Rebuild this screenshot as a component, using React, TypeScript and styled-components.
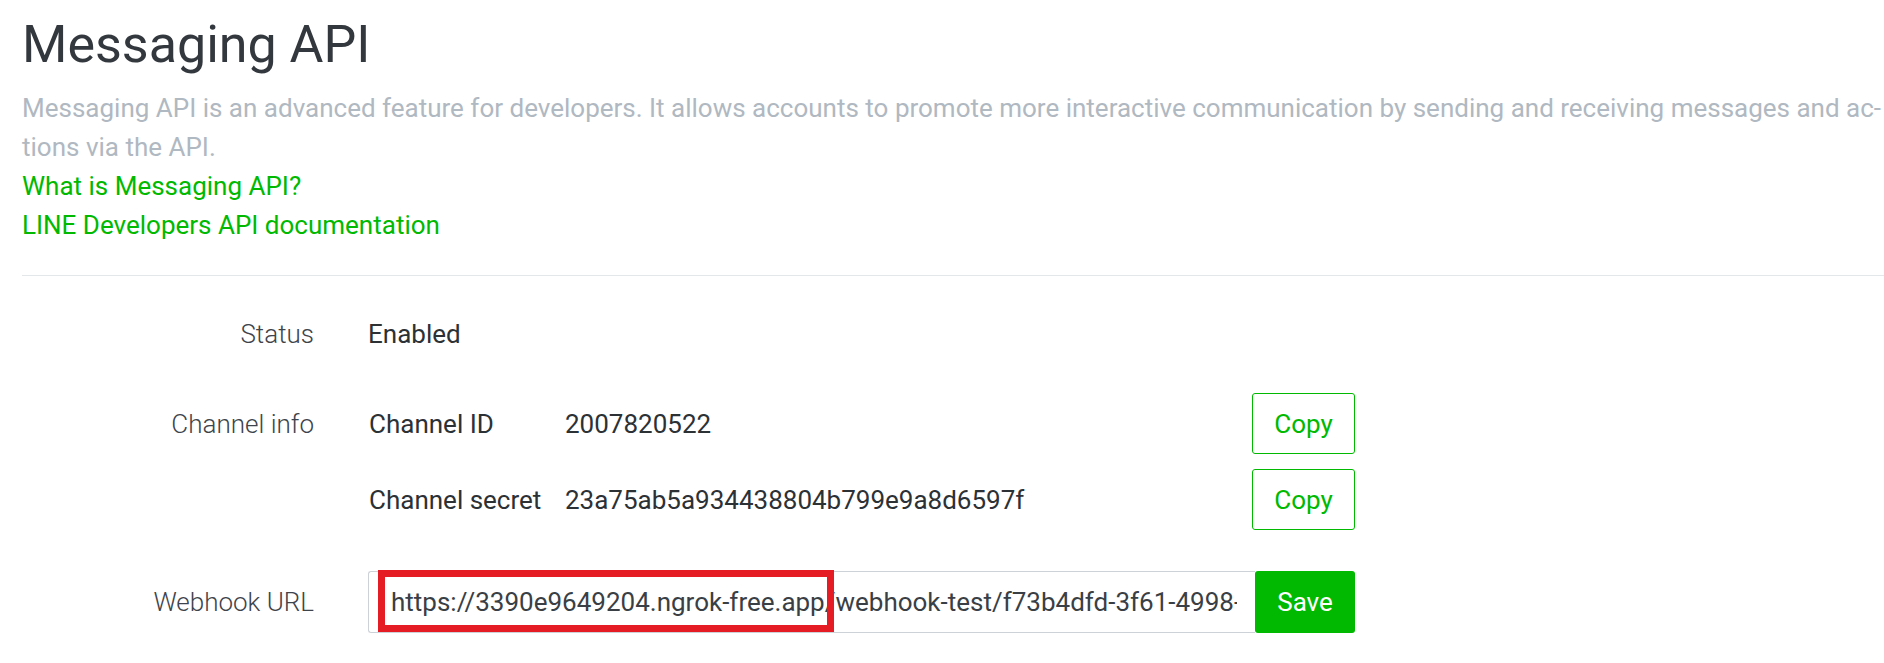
import React from "react";
import styled, { createGlobalStyle } from "styled-components";

const Global = createGlobalStyle`
  html, body {
    margin: 0;
    padding: 0;
    background: #ffffff;
    overflow: hidden;
  }
  body {
    font-family: Roboto, "Noto Sans", "Liberation Sans", sans-serif;
    -webkit-font-smoothing: antialiased;
  }
  * { box-sizing: border-box; }
`;

const Page = styled.main`
  padding: 12px 0 0 22px;
`;

const Title = styled.h1`
  margin: 0;
  font-size: 52px;
  line-height: 65px;
  font-weight: 400;
  color: #33383e;
`;

const Description = styled.p`
  margin: 12px 0 0;
  font-size: 26px;
  line-height: 39px;
  color: #b0b8c1;
  white-space: nowrap;
`;

const LinkLine = styled.a`
  display: block;
  font-size: 26px;
  line-height: 39px;
  color: #00b900;
  text-decoration: none;
`;

const Divider = styled.hr`
  margin: 30px 0 0;
  border: 0;
  border-top: 1px solid #e4e7ea;
  height: 0;
`;

const Form = styled.section`
  display: grid;
  grid-template-columns: 292px 987px;
  column-gap: 54px;
  row-gap: 39px;
  padding-top: 38px;
  align-items: start;
`;

const Label = styled.div<{ $h: number; $offset?: number }>`
  height: ${(p) => p.$h}px;
  margin-top: ${(p) => p.$offset ?? 0}px;
  display: flex;
  align-items: center;
  justify-content: flex-end;
  font-size: 26px;
  font-weight: 300;
  color: #3e444b;
  white-space: nowrap;
`;

const Value = styled.div<{ $h: number }>`
  height: ${(p) => p.$h}px;
  display: flex;
  align-items: center;
  font-size: 26px;
  color: #2c3136;
  white-space: nowrap;
`;

const InfoGrid = styled.div`
  display: grid;
  grid-template-columns: 197px 1fr 103px;
  row-gap: 15px;
  align-items: center;
`;

const InfoKey = styled.div`
  height: 61px;
  display: flex;
  align-items: center;
  font-size: 26px;
  color: #2c3136;
  padding-left: 1px;
  white-space: nowrap;
`;

const InfoVal = styled.div`
  font-size: 26px;
  color: #2c3136;
`;

const CopyButton = styled.button`
  height: 61px;
  width: 103px;
  border: 1px solid #00b900;
  border-radius: 3px;
  background: #ffffff;
  color: #00b900;
  font-family: inherit;
  font-size: 26px;
  padding: 0;
  cursor: pointer;
`;

const InputGroup = styled.div`
  position: relative;
  display: flex;
  height: 62px;
  margin-top: 2px;
`;

const UrlInput = styled.input`
  flex: 1;
  min-width: 0;
  height: 62px;
  border: 1px solid #cdd2d8;
  border-right: 0;
  border-radius: 3px 0 0 3px;
  padding: 0 18px 0 22px;
  font-family: inherit;
  font-size: 26px;
  color: #3a3f45;
  background: #fff;
  outline: none;
`;

const SaveButton = styled.button`
  width: 100px;
  height: 62px;
  border: 0;
  border-radius: 3px;
  background: #00b900;
  color: #ffffff;
  font-family: inherit;
  font-size: 26px;
  padding: 0;
  cursor: pointer;
`;

const Highlight = styled.div`
  position: absolute;
  left: 10px;
  top: -1px;
  width: 456px;
  height: 62px;
  border: 7px solid #e51c23;
  pointer-events: none;
`;

export default function App() {
  return (
    <>
      <Global />
      <Page>
        <Title>Messaging API</Title>
        <Description>
          Messaging API is an advanced feature for developers. It allows accounts to promote more
          interactive communication by sending and receiving messages and ac-
          <br />
          tions via the API.
        </Description>
        <LinkLine href="#">What is Messaging API?</LinkLine>
        <LinkLine href="#">LINE Developers API documentation</LinkLine>
        <Divider />
        <Form>
          <Label $h={40}>Status</Label>
          <Value $h={40}>Enabled</Value>

          <Label $h={61}>Channel info</Label>
          <InfoGrid>
            <InfoKey>Channel ID</InfoKey>
            <InfoVal>2007820522</InfoVal>
            <CopyButton>Copy</CopyButton>
            <InfoKey>Channel secret</InfoKey>
            <InfoVal>23a75ab5a934438804b799e9a8d6597f</InfoVal>
            <CopyButton>Copy</CopyButton>
          </InfoGrid>

          <Label $h={62} $offset={2}>Webhook URL</Label>
          <InputGroup>
            <UrlInput
              readOnly
              value="https://3390e9649204.ngrok-free.app/webhook-test/f73b4dfd-3f61-4998-a1c2-7e5d9b0f4a63"
            />
            <SaveButton>Save</SaveButton>
            <Highlight />
          </InputGroup>
        </Form>
      </Page>
    </>
  );
}
